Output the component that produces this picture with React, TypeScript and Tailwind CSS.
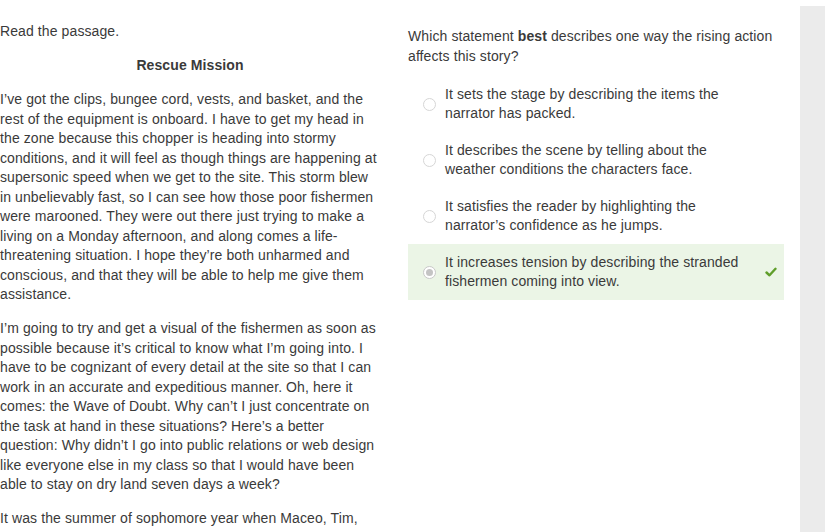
import React from "react";

const options = [
  { text: "It sets the stage by describing the items the narrator has packed.", selected: false },
  { text: "It describes the scene by telling about the weather conditions the characters face.", selected: false },
  { text: "It satisfies the reader by highlighting the narrator\u2019s confidence as he jumps.", selected: false },
  { text: "It increases tension by describing the stranded fishermen coming into view.", selected: true },
];

export default function App() {
  return (
    <div
      className="flex min-h-screen bg-white text-[14px] leading-[19.5px] tracking-[0.1px] text-[#3a3a3a]"
      style={{ fontFamily: '"Liberation Sans", Arial, sans-serif' }}
    >
      <div className="w-[380px] shrink-0 pt-[22px]">
        <p>Read the passage.</p>
        <p className="mt-[14.5px] text-center font-bold">Rescue Mission</p>
        <p className="mt-[14.5px]">
          I&#8217;ve got the clips, bungee cord, vests, and basket, and the rest of the equipment is onboard. I have to get my head in the zone because this chopper is heading into stormy conditions, and it will feel as though things are happening at supersonic speed when we get to the site. This storm blew in unbelievably fast, so I can see how those poor fishermen were marooned. They were out there just trying to make a living on a Monday afternoon, and along comes a life-threatening situation. I hope they&#8217;re both unharmed and conscious, and that they will be able to help me give them assistance.
        </p>
        <p className="mt-[14.5px]">
          I&#8217;m going to try and get a visual of the fishermen as soon as possible because it&#8217;s critical to know what I&#8217;m going into. I have to be cognizant of every detail at the site so that I can work in an accurate and expeditious manner. Oh, here it comes: the Wave of Doubt. Why can&#8217;t I just concentrate on the task at hand in these situations? Here&#8217;s a better question: Why didn&#8217;t I go into public relations or web design like everyone else in my class so that I would have been able to stay on dry land seven days a week?
        </p>
        <p className="mt-[14.5px]">
          It was the summer of sophomore year when Maceo, Tim, and I decided to take a trip to the coast together.
        </p>
      </div>
      <div className="ml-[28px] w-[376px] shrink-0 pt-[26px]">
        <p className="leading-[20px]">
          Which statement <b className="font-bold">best</b> describes one way the rising action affects this story?
        </p>
        <div className="mt-[10px] flex flex-col">
          {options.map((o, i) => (
            <div
              key={i}
              className={`flex h-[56px] items-center pl-[15px] pr-[7px] ${o.selected ? "bg-[#ebf5e6]" : ""}`}
            >
              <div
                className={`flex h-[13px] w-[13px] shrink-0 items-center justify-center rounded-full border ${o.selected ? "border-[#c8c8c8] bg-white" : "border-[#d6d6d6] bg-white"}`}
              >
                {o.selected && <div className="h-[7px] w-[7px] rounded-full bg-[#c4c4c4]" />}
              </div>
              <div className="ml-[9px] w-[302px] leading-[19px] text-[#3a3a3a]">{o.text}</div>
              {o.selected && (
                <svg className="ml-auto" width="12" height="10" viewBox="0 0 12 10">
                  <path d="M1.5 5.5 L4.5 8.3 L10.5 1.8" fill="none" stroke="#5f9e2a" strokeWidth="2.4" strokeLinecap="round" strokeLinejoin="round" />
                </svg>
              )}
            </div>
          ))}
        </div>
      </div>
      <div className="ml-auto mt-[6px] w-[25px] shrink-0 bg-[#ebebeb]" />
    </div>
  );
}
